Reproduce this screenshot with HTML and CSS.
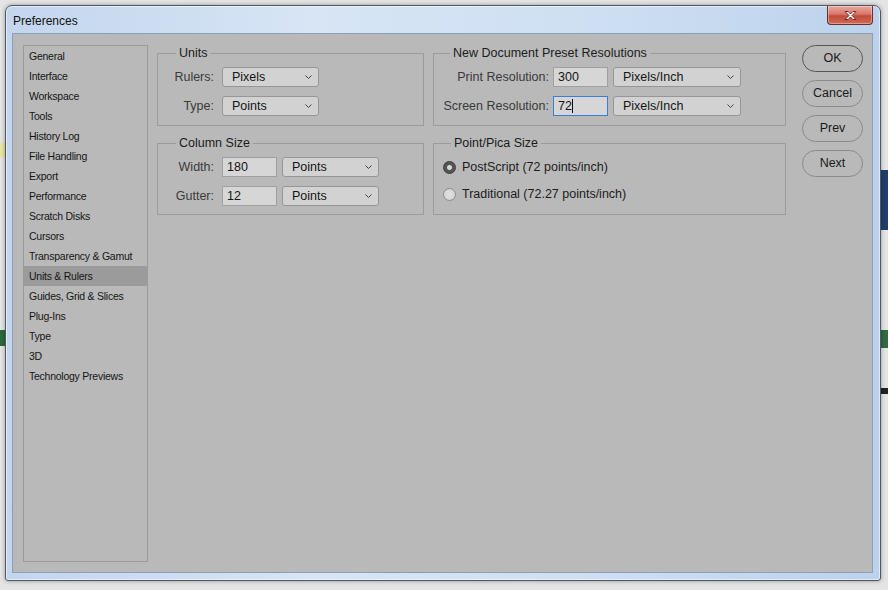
FILE: index.html
```html
<!DOCTYPE html>
<html lang="en">
<head>
  <meta charset="UTF-8">
  <title>Preferences</title>
  <link rel="stylesheet" href="styles.css">
</head>
<body>
  <div class="desktop">
    <div class="window">
      <div class="titlebar">
        <span class="title">Preferences</span>
        <div class="close">
          <svg width="17" height="11" viewBox="0 0 17 11">
            <path d="M3 1.5 L6 1.5 L8.5 4 L11 1.5 L14 1.5 L10 5.5 L14 9.5 L11 9.5 L8.5 7 L6 9.5 L3 9.5 L7 5.5 Z" fill="#fff" stroke="#5a2620" stroke-width="0.9" stroke-linejoin="round"/>
          </svg>
        </div>
      </div>

      <div class="client">
        <ul class="nav">
          <li>General</li>
          <li>Interface</li>
          <li>Workspace</li>
          <li>Tools</li>
          <li>History Log</li>
          <li>File Handling</li>
          <li>Export</li>
          <li>Performance</li>
          <li>Scratch Disks</li>
          <li>Cursors</li>
          <li>Transparency &amp; Gamut</li>
          <li class="active">Units &amp; Rulers</li>
          <li>Guides, Grid &amp; Slices</li>
          <li>Plug-Ins</li>
          <li>Type</li>
          <li>3D</li>
          <li>Technology Previews</li>
        </ul>

        <div class="panels">
          <fieldset class="group units">
            <legend>Units</legend>
            <div class="form">
              <label>Rulers:</label>
              <div class="select w97">Pixels<svg class="chev" width="7" height="4" viewBox="0 0 7 4"><path d="M0.5 0.5 L3.5 3.5 L6.5 0.5" fill="none" stroke="#444" stroke-width="1"/></svg></div>
              <label>Type:</label>
              <div class="select w97">Points<svg class="chev" width="7" height="4" viewBox="0 0 7 4"><path d="M0.5 0.5 L3.5 3.5 L6.5 0.5" fill="none" stroke="#444" stroke-width="1"/></svg></div>
            </div>
          </fieldset>

          <fieldset class="group resolutions">
            <legend>New Document Preset Resolutions</legend>
            <div class="form wide">
              <label>Print Resolution:</label>
              <div class="field">300</div>
              <div class="select w128">Pixels/Inch<svg class="chev" width="7" height="4" viewBox="0 0 7 4"><path d="M0.5 0.5 L3.5 3.5 L6.5 0.5" fill="none" stroke="#444" stroke-width="1"/></svg></div>
              <label>Screen Resolution:</label>
              <div class="field focus">72<span class="caret"></span></div>
              <div class="select w128">Pixels/Inch<svg class="chev" width="7" height="4" viewBox="0 0 7 4"><path d="M0.5 0.5 L3.5 3.5 L6.5 0.5" fill="none" stroke="#444" stroke-width="1"/></svg></div>
            </div>
          </fieldset>

          <fieldset class="group column">
            <legend>Column Size</legend>
            <div class="form three">
              <label>Width:</label>
              <div class="field">180</div>
              <div class="select w97">Points<svg class="chev" width="7" height="4" viewBox="0 0 7 4"><path d="M0.5 0.5 L3.5 3.5 L6.5 0.5" fill="none" stroke="#444" stroke-width="1"/></svg></div>
              <label>Gutter:</label>
              <div class="field">12</div>
              <div class="select w97">Points<svg class="chev" width="7" height="4" viewBox="0 0 7 4"><path d="M0.5 0.5 L3.5 3.5 L6.5 0.5" fill="none" stroke="#444" stroke-width="1"/></svg></div>
            </div>
          </fieldset>

          <fieldset class="group pica">
            <legend>Point/Pica Size</legend>
            <div class="radio"><span class="dot on"></span>PostScript (72 points/inch)</div>
            <div class="radio"><span class="dot"></span>Traditional (72.27 points/inch)</div>
          </fieldset>
        </div>

        <div class="buttons">
          <div class="btn default">OK</div>
          <div class="btn">Cancel</div>
          <div class="btn">Prev</div>
          <div class="btn">Next</div>
        </div>
      </div>
    </div>
  </div>
</body>
</html>
```

FILE: styles.css
```css
html, body {
  margin: 0;
  padding: 0;
}
body {
  width: 888px;
  height: 590px;
  overflow: hidden;
  font-family: "Liberation Sans", Arial, sans-serif;
  color: #1c1c1c;
  /* bits of the picture behind the dialog */
  background:
    linear-gradient(#e8e6a0, #e8e6a0) 0 143px / 6px 14px no-repeat,
    linear-gradient(#2d6a3a, #2d6a3a) 0 330px / 6px 16px no-repeat,
    linear-gradient(#1f3f6a, #1f3f6a) 881px 170px / 7px 60px no-repeat,
    linear-gradient(#2f6b3d, #2f6b3d) 881px 330px / 7px 18px no-repeat,
    linear-gradient(#222, #222) 881px 388px / 7px 6px no-repeat,
    #e4e4e4;
}
.desktop {
  padding: 5px 0 0 5px;
}
.window {
  width: 874px;
  height: 574px;
  border: 1px solid #4d5866;
  border-radius: 7px 7px 3px 3px;
  background: linear-gradient(90deg, #c3d6ee 0%, #d7e5f5 35%, #cfe0f3 65%, #bcd2ec 100%);
  box-shadow: 0 0 4px rgba(0, 0, 0, 0.35), inset 0 0 0 1px rgba(255, 255, 255, 0.55);
  display: flex;
  flex-direction: column;
}
.titlebar {
  height: 27px;
  display: flex;
  align-items: flex-start;
  justify-content: space-between;
  padding-left: 7px;
}
.title {
  font-size: 12px;
  color: #111;
  margin-top: 8px;
}
.close {
  width: 44px;
  height: 18px;
  margin-right: 7px;
  border: 1px solid #6b3028;
  border-top: none;
  border-radius: 0 0 4px 4px;
  background: linear-gradient(#e9a99f 0%, #d7786a 45%, #c24a3a 55%, #cf6b55 100%);
  box-shadow: inset 0 0 0 1px rgba(255, 255, 255, 0.35);
  display: flex;
  align-items: center;
  justify-content: center;
}
.client {
  flex: 1;
  margin: 0 7px 7px 6px;
  border: 1px solid #8c9fb6;
  background: #b9b9b9;
  display: flex;
  padding: 11px 9px 10px 10px;
  gap: 9px;
}
.client > * {
  flex-shrink: 0;
}

/* left list */
.nav {
  list-style: none;
  margin: 0;
  padding: 0;
  width: 123px;
  border: 1px solid #9b9b9b;
  font-size: 10.5px;
  letter-spacing: -0.25px;
  color: #161616;
}
.nav li {
  height: 20px;
  line-height: 20px;
  padding-left: 5px;
  white-space: nowrap;
}
.nav li.active {
  background: #9b9b9b;
}

/* groups */
.panels {
  display: grid;
  grid-template-columns: 267px 353px;
  grid-template-rows: 81px 80px;
  column-gap: 9px;
  row-gap: 9px;
  align-content: start;
}
.group {
  margin: 0;
  border: 1px solid #9c9c9c;
  padding: 6px 8px 8px 0;
  min-width: 0;
}
.group legend {
  font-size: 12.5px;
  line-height: 16px;
  color: #1c1c1c;
  padding: 0 3px;
  margin-left: 18px;
}
.resolutions legend {
  margin-left: 16px;
}
.pica legend {
  margin-left: 8px;
}
.form {
  display: grid;
  grid-template-columns: 56px auto;
  column-gap: 8px;
  row-gap: 9px;
  justify-content: start;
  align-items: center;
  font-size: 12.5px;
}
.form.three {
  grid-template-columns: 56px 58px 97px;
  column-gap: 5px;
}
.form.three .field {
  margin-left: 3px;
}
.form.wide {
  grid-template-columns: 115px 56px 128px;
  column-gap: 4px;
}
.form label {
  text-align: right;
  color: #3a3a3a;
  white-space: nowrap;
}
.select, .field {
  box-sizing: border-box;
  height: 20px;
  line-height: 18px;
  font-size: 12.5px;
  color: #151515;
}
.select {
  border: 1px solid #969696;
  border-radius: 3px;
  background: #d2d2d2;
  padding-left: 9px;
  display: flex;
  align-items: center;
  justify-content: space-between;
  padding-right: 6px;
}
.w97 { width: 97px; }
.w128 { width: 128px; }
.field {
  width: 55px;
  border: 1px solid #a0a0a0;
  background: #d6d6d6;
  padding-left: 4px;
}
.field.focus {
  border-color: #3d7ed4;
  display: flex;
  align-items: center;
}
.caret {
  display: inline-block;
  width: 1px;
  height: 14px;
  background: #111;
}

/* radios */
.pica {
  padding: 6px 8px 8px 9px;
}
.radio {
  height: 20px;
  display: flex;
  align-items: center;
  gap: 6px;
  font-size: 12.5px;
  color: #1c1c1c;
  margin-bottom: 7px;
}
.dot {
  box-sizing: border-box;
  width: 13px;
  height: 13px;
  border-radius: 50%;
  border: 1px solid #8e8e8e;
  background: radial-gradient(circle, #e2e2e2 0%, #cfcfcf 100%);
}
.dot.on {
  border-color: #3a3a3a;
  background: radial-gradient(circle, #d6d6d6 0 2px, #555 3px);
}

/* buttons */
.buttons {
  display: flex;
  flex-direction: column;
  gap: 8px;
  margin-left: 7px;
}
.btn {
  box-sizing: border-box;
  width: 61px;
  height: 27px;
  border: 1px solid #8a8a8a;
  border-radius: 14px;
  font-size: 12.5px;
  line-height: 25px;
  text-align: center;
  color: #1a1a1a;
}
.btn.default {
  border-color: #555;
}
```
